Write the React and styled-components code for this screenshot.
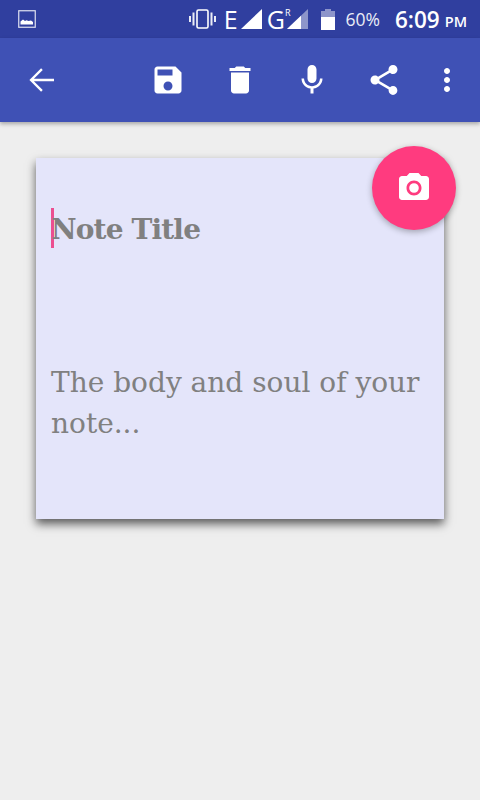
import React from 'react'
import styled, { createGlobalStyle } from 'styled-components'

const GlobalStyle = createGlobalStyle`
  html, body {
    margin: 0;
    padding: 0;
    background: #eeeeee;
  }
  * {
    box-sizing: border-box;
  }
`

const Page = styled.div`
  width: 480px;
  height: 800px;
  overflow: hidden;
  background: #eeeeee;
  display: flex;
  flex-direction: column;
`

const StatusBar = styled.div`
  height: 38px;
  background: #303f9f;
  color: #fff;
  display: flex;
  align-items: center;
  padding: 0 13px 0 18px;
  font-family: "Open Sans", "Noto Sans", sans-serif;
`

const StatusGroup = styled.div`
  margin-left: auto;
  display: flex;
  align-items: center;
`

const NetLetter = styled.span`
  font-size: 25px;
  line-height: 38px;
  margin-left: ${props => props.$left || 0}px;
`

const Roam = styled.span`
  font-size: 9px;
  line-height: 9px;
  align-self: flex-start;
  margin-top: 8px;
  margin-right: -3px;
`

const Percent = styled.span`
  font-size: 17.5px;
  margin-left: 10px;
  opacity: 0.9;
`

const Clock = styled.span`
  font-size: 22.5px;
  font-weight: 600;
  margin-left: 15px;
`

const Meridiem = styled.span`
  font-size: 14.5px;
  font-weight: 600;
  margin-left: 5px;
  margin-top: 4px;
`

const StatusIcon = styled.svg`
  display: block;
  flex: none;
  margin-left: ${props => props.$left || 0}px;
`

const Toolbar = styled.div`
  height: 84px;
  background: #3f51b5;
  box-shadow: 0 2px 4px rgba(0, 0, 0, 0.3);
  display: flex;
  align-items: center;
  padding-right: 6px;
  position: relative;
`

const Spacer = styled.div`
  flex: 1;
`

const ToolButton = styled.div`
  width: ${props => props.$width || 72}px;
  height: 84px;
  display: flex;
  align-items: center;
  justify-content: center;
`

const Icon = styled.svg`
  width: 36px;
  height: 36px;
  fill: #fff;
  display: block;
`

const Content = styled.div`
  flex: 1;
  padding: 36px 36px 0;
`

const Card = styled.div`
  position: relative;
  height: 361px;
  background: #e4e5fa;
  box-shadow: 0 5px 9px rgba(0, 0, 0, 0.62);
  padding: 50px 15px 0;
  font-family: "DejaVu Serif", "Liberation Serif", serif;
  color: #808080;
`

const Title = styled.div`
  height: 40px;
  font-size: 28px;
  line-height: 44px;
  font-weight: 700;
  letter-spacing: -0.85px;
  white-space: nowrap;
  display: flex;
`

const Caret = styled.span`
  width: 3px;
  height: 40px;
  background: #ec4f90;
  margin-right: -3px;
  flex: none;
`

const Body = styled.div`
  margin-top: 114px;
  font-size: 28px;
  line-height: 41px;
`

const Fab = styled.div`
  position: absolute;
  top: -12px;
  right: -12px;
  width: 84px;
  height: 84px;
  border-radius: 50%;
  background: #ff3b7f;
  box-shadow: 0 2px 6px rgba(0, 0, 0, 0.3);
  display: flex;
  align-items: center;
  justify-content: center;
`

const ICONS = {
  back: 'M20 11.2H6.6l5.9-5.9L11.4 4.2 3.6 12l7.8 7.8 1.1-1.1-5.9-5.9H20z',
  save: 'M17 3H5c-1.11 0-2 .9-2 2v14c0 1.1.89 2 2 2h14c1.1 0 2-.9 2-2V7l-4-4zm-5 16c-1.66 0-3-1.34-3-3s1.34-3 3-3 3 1.34 3 3-1.34 3-3 3zm3-10H5V5h10v4z',
  trash: 'M6 19c0 1.1.9 2 2 2h8c1.1 0 2-.9 2-2V7H6v12zM19 4h-3.5l-1-1h-5l-1 1H5v2h14V4z',
  mic: 'M12 14c1.66 0 2.99-1.34 2.99-3L15 5c0-1.66-1.34-3-3-3S9 3.34 9 5v6c0 1.66 1.34 3 3 3zm5.3-3c0 3-2.54 5.1-5.3 5.1S6.7 14 6.7 11H5c0 3.41 2.72 6.23 6 6.72V21h2v-3.28c3.28-.48 6-3.3 6-6.72h-1.7z',
  share: 'M18 16.08c-.76 0-1.44.3-1.96.77L8.91 12.7c.05-.23.09-.46.09-.7s-.04-.47-.09-.7l7.05-4.11c.54.5 1.25.81 2.04.81 1.66 0 3-1.34 3-3s-1.34-3-3-3-3 1.34-3 3c0 .24.04.47.09.7L8.04 9.81C7.5 9.31 6.79 9 6 9c-1.66 0-3 1.34-3 3s1.34 3 3 3c.79 0 1.5-.31 2.04-.81l7.12 4.16c-.05.21-.08.43-.08.65 0 1.61 1.31 2.92 2.92 2.92 1.61 0 2.92-1.31 2.92-2.92s-1.31-2.92-2.92-2.92z',
  more: 'M12 8c1.1 0 2-.9 2-2s-.9-2-2-2-2 .9-2 2 .9 2 2 2zm0 2c-1.1 0-2 .9-2 2s.9 2 2 2 2-.9 2-2-.9-2-2-2zm0 6c-1.1 0-2 .9-2 2s.9 2 2 2 2-.9 2-2-.9-2-2-2z',
  camera: 'M9 2L7.17 4H4c-1.1 0-2 .9-2 2v12c0 1.1.9 2 2 2h16c1.1 0 2-.9 2-2V6c0-1.1-.9-2-2-2h-3.17L15 2H9zm3 15c-2.76 0-5-2.24-5-5s2.24-5 5-5 5 2.24 5 5-2.24 5-5 5zm0-8.2a3.2 3.2 0 1 0 0 6.4 3.2 3.2 0 0 0 0-6.4z'
}

const MaterialIcon = ({ name }) => (
  <Icon viewBox="0 0 24 24">
    <path fillRule="evenodd" d={ICONS[name]} />
  </Icon>
)

const GalleryIcon = () => (
  <StatusIcon width="18" height="18" viewBox="0 0 18 18">
    <rect x="0.75" y="0.75" width="16.5" height="16.5" fill="none" stroke="#fff" strokeOpacity="0.85" strokeWidth="1.2" />
    <path d="M2.5 14.5v-3l2.5-2 2 1.5 1.5-.7 2 .7 2.5-.5 2 1.5v2.5z" fill="#fff" />
  </StatusIcon>
)

const VibrateIcon = () => (
  <StatusIcon width="27" height="20" viewBox="0 0 27 20">
    <rect x="8" y="1" width="11" height="18" rx="1.5" fill="none" stroke="#fff" strokeWidth="1.6" />
    <path d="M4.5 3.5v13M22.5 3.5v13" stroke="#fff" strokeWidth="2" opacity="0.9" />
    <path d="M1 7v6M26 7v6" stroke="#fff" strokeWidth="2" opacity="0.9" />
  </StatusIcon>
)

const SignalIcon = ({ left, partial }) => (
  <StatusIcon $left={left} width="21" height="20" viewBox="0 0 21 20">
    <path d="M0 20L21 0v20z" fill="#fff" fillOpacity={partial ? 0.45 : 1} />
    {partial && <path d="M0 20L14 6.7V20z" fill="#fff" />}
  </StatusIcon>
)

const BatteryIcon = () => (
  <StatusIcon $left={13} width="14" height="21" viewBox="0 0 14 21">
    <path d="M4 0h6v2h4v19H0V2h4z" fill="#fff" fillOpacity="0.45" />
    <rect x="0" y="8" width="14" height="13" fill="#fff" />
  </StatusIcon>
)

export default function App() {
  return (
    <Page>
      <GlobalStyle />
      <StatusBar>
        <GalleryIcon />
        <StatusGroup>
          <VibrateIcon />
          <NetLetter $left={8}>E</NetLetter>
          <SignalIcon left={3} />
          <NetLetter $left={5}>G</NetLetter>
          <Roam>R</Roam>
          <SignalIcon partial />
          <BatteryIcon />
          <Percent>60%</Percent>
          <Clock>6:09</Clock>
          <Meridiem>PM</Meridiem>
        </StatusGroup>
      </StatusBar>
      <Toolbar>
        <ToolButton $width={84}><MaterialIcon name="back" /></ToolButton>
        <Spacer />
        <ToolButton><MaterialIcon name="save" /></ToolButton>
        <ToolButton><MaterialIcon name="trash" /></ToolButton>
        <ToolButton><MaterialIcon name="mic" /></ToolButton>
        <ToolButton><MaterialIcon name="share" /></ToolButton>
        <ToolButton $width={54}><MaterialIcon name="more" /></ToolButton>
      </Toolbar>
      <Content>
        <Card>
          <Title><Caret />Note Title</Title>
          <Body>The body and soul of your note...</Body>
          <Fab><MaterialIcon name="camera" /></Fab>
        </Card>
      </Content>
    </Page>
  )
}
